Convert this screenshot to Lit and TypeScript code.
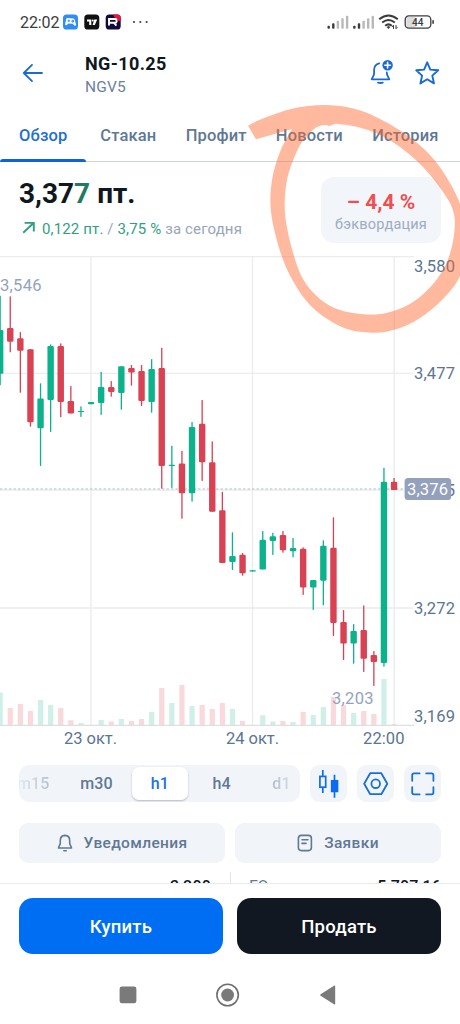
import { html, svg, css, LitElement } from "lit";
import { customElement } from "lit/decorators.js";

type Point = [number, number];

// up, high, low, body top, body bottom, volume height
type Candle = [boolean, number, number, number, number, number];

const STEP = 10.1;
const CHART_TOP = 256;
const VOLUME_BASE = 725;

const CANDLES: Candle[] = [
  [true, 295.7, 385.3, 330, 373.7, 32.5],
  [false, 296.3, 352.3, 328, 341.7, 17],
  [false, 332, 392.7, 338.3, 350.7, 21],
  [false, 349, 426.7, 349.3, 422.3, 14],
  [true, 383.3, 466, 398.5, 428.2, 25],
  [true, 344.3, 432, 346, 400, 20],
  [false, 343.3, 417.3, 346, 402, 17],
  [false, 386, 413.3, 401, 413.5, 4.7],
  [true, 406.3, 417, 411, 412, 2],
  [true, 402, 404.2, 402, 404.2, 0],
  [true, 371.7, 415, 387, 403, 5],
  [false, 381, 396.7, 387, 392, 3.5],
  [true, 366.3, 409.7, 366.3, 393, 6],
  [false, 365, 385.7, 368, 372.5, 4],
  [false, 365, 406, 371, 401, 6],
  [true, 359, 412.7, 369, 402, 13],
  [false, 347.7, 488.7, 368, 466, 37],
  [true, 445.7, 488, 464.7, 465.9, 22],
  [false, 450.7, 518.7, 463.5, 493.2, 40],
  [true, 422, 501.7, 427, 493.2, 19],
  [false, 400, 481, 423.8, 462.3, 20],
  [false, 441.3, 511.7, 462.2, 511.8, 16],
  [false, 491.7, 562.7, 510.2, 562.9, 22],
  [true, 532.3, 570, 556, 562, 16],
  [false, 553, 575.7, 554.8, 573.2, 4],
  [true, 570, 571.7, 570.2, 571.6, 0],
  [true, 531, 569.3, 539.7, 569.5, 9.7],
  [true, 532.7, 555, 536.3, 541, 3.5],
  [false, 531, 552.7, 535, 550.2, 4],
  [true, 538, 557.3, 548, 551.2, 3],
  [false, 547.3, 595, 548.8, 587.4, 13],
  [true, 580, 610, 580, 587.4, 10],
  [true, 540.3, 605.3, 545.8, 580.8, 18],
  [false, 517.3, 636, 547.8, 623, 28],
  [false, 610, 660, 622, 643.4, 20],
  [true, 624, 663.7, 631, 643.4, 12],
  [false, 605.3, 672, 630, 658.8, 14],
  [false, 651, 686, 655, 662, 11],
  [true, 467.7, 666.7, 481.7, 663, 46],
  [false, 478, 490, 481.7, 490, 1],
];

const MARKER_OUTER: Point[] = [
  [248, 125.7], [263, 118.5], [293, 108.5], [323, 105], [350, 107.7], [373, 115.5],
  [403, 132.5], [430, 155], [450, 183], [463, 213], [467, 245], [460, 276],
  [443, 299], [420, 318], [397, 329], [373, 332.7], [343, 327.5], [313, 308],
  [293, 281], [280, 251], [271, 212], [272, 180], [280, 152], [292, 129],
];

const MARKER_INNER: Point[] = [
  [335, 123.8], [353, 126], [377, 133.5], [400, 147], [423, 167], [443, 192],
  [453.5, 212], [454, 235], [447, 262], [433, 284], [413, 302], [390, 312],
  [367, 314.5], [340, 310], [320, 299], [303, 279], [292, 249], [285, 213],
  [287, 180], [297, 151], [307, 136], [317, 127], [326, 125], [329, 126.2],
];

function smooth(points: Point[]) {
  let d = `M${points[0][0]} ${points[0][1]}`;
  for (let i = 0; i < points.length - 1; i++) {
    const a = points[i - 1] ?? points[i];
    const b = points[i];
    const c = points[i + 1];
    const e = points[i + 2] ?? c;
    d += `C${b[0] + (c[0] - a[0]) / 6} ${b[1] + (c[1] - a[1]) / 6}`;
    d += ` ${c[0] - (e[0] - b[0]) / 6} ${c[1] - (e[1] - b[1]) / 6} ${c[0]} ${c[1]}`;
  }
  return d;
}

@customElement("status-bar")
export class StatusBarElement extends LitElement {
  static styles = css`
    :host {
      display: flex;
      align-items: center;
      justify-content: space-between;
      height: 44px;
      padding: 0 24px 0 20px;
      color: #3c3c3c;
    }

    .side {
      display: flex;
      align-items: center;
    }

    .time {
      font-size: 16px;
      width: 43px;
      letter-spacing: -0.1px;
      white-space: nowrap;
    }

    svg {
      display: block;
    }

    text {
      font-size: 10px;
      font-weight: 500;
      fill: #3c3c3c;
    }
  `;

  signal() {
    return [0, 1, 2, 3, 4].map(
      (i) => svg`<rect x=${i * 4.6} y=${10.5 - i * 2.5} width="2.4" height=${3 + i * 2.5} rx="0.8"
        fill=${i < 2 ? "#3c3c3c" : "#b9b9b9"} />`
    );
  }

  render() {
    return html`
      <div class="side">
        <span class="time">22:02</span>
        <svg width="88" height="16" viewBox="0 0 88 16">
          <rect x="0" y="0.5" width="15" height="15" rx="3.6" fill="#2f8df3" />
          <path d="M3.2 5.2Q3.4 4 4.6 4L10.2 4.6Q11.4 4.8 11.8 6L13 10.4Q13.2 12.4 11.4 11.4L9.6 9.8L5.6 9.4L3.4 11.2Q1.8 11.8 2.2 9.6Z" fill="#fff" />
          <path d="M4.6 6.8H7M5.8 5.6V8M9 6.4h1.6v1.6h-1.6z" stroke="#2f8df3" fill="none" />
          <rect x="21.3" y="0.5" width="15" height="15" rx="3.6" fill="#111" />
          <path d="M24 5.5H28.3V11H26.2V7.5H24ZM31.2 5.5H34.2L31.8 11H29.6Z" fill="#fff" />
          <circle cx="29.7" cy="6.5" r="1" fill="#fff" />
          <rect x="42.7" y="0.5" width="15" height="15" rx="3.6" fill="#130a3c" />
          <path d="M50 0.5H54.1Q57.7 0.5 57.7 4.1V7.5Q52 6 50 0.5Z" fill="#ed143b" />
          <path d="M46 11.6V5H52.2Q53.6 5 53.6 6.4V7.4Q53.6 8.7 52.2 8.7H46.5M50.8 8.7L53.4 11.6" stroke="#fff" stroke-width="1.9" fill="none" />
          <circle cx="71" cy="8" r="1.1" fill="#444" />
          <circle cx="77.3" cy="8" r="1.1" fill="#444" />
          <circle cx="83.6" cy="8" r="1.1" fill="#444" />
        </svg>
      </div>
      <div class="side">
        <svg width="109" height="18" viewBox="0 0 109 18">
          <g transform="translate(0.5 2.2)">${this.signal()}</g>
          <g transform="translate(26.2 2.2)">${this.signal()}</g>
          <g fill="none" stroke="#3c3c3c" stroke-width="2">
            <path d="M52.2 6.3Q61.5 -1.2 70.8 6.3" />
            <path d="M55.2 9.6Q61.5 4.4 67.8 9.6" />
            <path d="M58.2 12.7Q61.5 10 64.8 12.7" />
          </g>
          <path d="M59.6 14L61.5 13L63.4 14L61.5 16Z" fill="#3c3c3c" />
          <path d="M66.5 16V12.4M65 14L66.5 12.2M69 12V15.6M70.5 14L69 15.8" stroke="#3c3c3c" fill="none" />
          <rect x="79.4" y="4" width="10" height="10.4" rx="2.4" fill="#dcdcdc" />
          <rect x="78.2" y="2.9" width="25.6" height="12.2" rx="3.6" fill="none" stroke="#3c3c3c" stroke-width="1.3" />
          <rect x="105.3" y="7" width="1.6" height="4" rx="0.8" fill="#3c3c3c" />
          <text x="85" y="12.6">44</text>
        </svg>
      </div>
    `;
  }
}

@customElement("price-chart")
export class PriceChartElement extends LitElement {
  static styles = css`
    :host {
      display: block;
      height: 500px;
    }

    svg {
      display: block;
    }

    .grid {
      stroke: #eaecee;
      stroke-width: 1.3;
    }

    .base {
      stroke: #dedfe1;
      stroke-width: 1.3;
    }

    .last {
      stroke: #b4bbc7;
      stroke-width: 1.2;
      stroke-dasharray: 2.4 2.1;
    }

    .up {
      fill: #0bb28c;
    }

    .down {
      fill: #d84253;
    }

    .volume.up {
      fill: #cff0e7;
    }

    .volume.down {
      fill: #f9d9dc;
    }

    text {
      font-size: 16.5px;
      fill: #5b7592;
    }

    .extreme {
      fill: #94a3be;
    }

    .tag {
      fill: #93a1bd;
    }

    .tag-text {
      fill: #fff;
    }
  `;

  candle([up, high, low, top, bottom]: Candle, i: number) {
    const x = 0.15 + i * STEP;
    const side = up ? "up" : "down";
    return svg`
      <rect class=${side} x=${x - 0.65} y=${high} width="1.3" height=${low - high} rx="0.4" />
      <rect class=${side} x=${x - 3.2} y=${top} width="6.4" height=${bottom - top} rx=${Math.min(1.2, (bottom - top) / 2)} />
    `;
  }

  volume(c: Candle, i: number) {
    return svg`<rect class="volume ${c[0] ? "up" : "down"}" x=${0.15 + i * STEP - 2.6}
      y=${VOLUME_BASE - c[5]} width="5.2" height=${c[5]} />`;
  }

  label(text: string, x: number, y: number, width: number, cls = "") {
    return svg`<text class=${cls} x=${x} y=${y} textLength=${width}>${text}</text>`;
  }

  render() {
    return html`
      <svg width="460" height="500" viewBox="0 ${CHART_TOP} 460 500">
        <path class="grid" d="M0 256.6H414M0 373.4H404M0 490.2H404M0 608H404M404 373.4H413M404 608H413" />
        <path class="grid" d="M91 256V725M252.5 256V725M394.2 256V725" />
        ${CANDLES.map((c, i) => this.volume(c, i))}
        <path class="base" d="M0 725.3H414" />
        <path class="last" d="M0 489H404" />
        ${CANDLES.map((c, i) => this.candle(c, i))}
        ${this.label("3,546", 0, 290.7, 41.5, "extreme")}
        ${this.label("3,203", 332, 703.7, 41.5, "extreme")}
        ${this.label("3,580", 414, 271.8, 41)}
        ${this.label("3,477", 414, 379.4, 41)}
        ${this.label("3,375", 414, 496, 41)}
        ${this.label("3,272", 414, 614, 41)}
        ${this.label("3,169", 414, 722.2, 41)}
        ${this.label("23 окт.", 64, 743.7, 53)}
        ${this.label("24 окт.", 226, 743.7, 53)}
        ${this.label("22:00", 363, 743.7, 41.5)}
        <rect class="tag" x="404.6" y="478" width="46.6" height="22" rx="3.5" />
        ${this.label("3,376", 407, 495.4, 41, "tag-text")}
      </svg>
    `;
  }
}

@customElement("app-root")
export class AppRootElement extends LitElement {
  static styles = css`
    :host {
      display: flex;
      flex-direction: column;
      position: relative;
      width: 460px;
      height: 1024px;
      overflow: hidden;
      background: #fff;
      font-family: Roboto, "Liberation Sans", sans-serif;
      color: #0f1720;
    }

    svg {
      display: block;
    }

    header {
      display: flex;
      align-items: center;
      height: 58px;
      padding: 0 20px 0 22px;
    }

    .title {
      flex: 1;
      padding: 3px 0 0 41px;
    }

    h1 {
      margin: 0;
      font-size: 18px;
      font-weight: 700;
      line-height: 24px;
      letter-spacing: 0.4px;
    }

    .ticker {
      font-size: 15.5px;
      line-height: 22px;
      letter-spacing: 0.2px;
      color: #6b82a0;
    }

    .head-icons {
      display: flex;
      gap: 20px;
    }

    .tabs {
      display: flex;
      align-items: center;
      gap: 29.3px;
      height: 54px;
      padding: 13px 0 0 19px;
      box-sizing: border-box;
      font-size: 16.5px;
      font-weight: 500;
      letter-spacing: 0.15px;
      color: #5f7894;
      white-space: nowrap;
    }

    .tabs .active {
      margin-right: 3.5px;
      color: #1f6fd0;
    }

    .rule {
      height: 3px;
      margin-top: 3px;
      background: linear-gradient(#ccd4e2, #ccd4e2) 0 2px / 100% 1px no-repeat;
    }

    .indicator {
      width: 86px;
      height: 3px;
      border-radius: 3px 3px 0 0;
      background: #0b64dc;
    }

    .summary {
      display: flex;
      justify-content: space-between;
      height: 94px;
      box-sizing: border-box;
      padding: 15px 19px 0;
    }

    .price {
      font-size: 28px;
      font-weight: 700;
      line-height: 34px;
    }

    .tick {
      color: #237a63;
    }

    .change {
      display: flex;
      align-items: center;
      gap: 6px;
      margin-top: 8px;
      padding-left: 3px;
      font-size: 15px;
      line-height: 20px;
      letter-spacing: 0.14px;
      color: #97a5ba;
      white-space: nowrap;
    }

    .change b {
      font-weight: 400;
      color: #2f9f7f;
    }

    .spread {
      display: flex;
      flex-direction: column;
      align-items: center;
      width: 120px;
      height: 66px;
      border-radius: 13px;
      background: #f2f5fa;
    }

    .spread-value {
      margin-top: 12px;
      font-size: 21px;
      font-weight: 700;
      line-height: 26px;
      color: #f04f4f;
    }

    .spread-name {
      font-size: 14.5px;
      line-height: 20px;
      letter-spacing: 0.2px;
      color: #9dabc3;
    }

    .toolbar {
      display: flex;
      gap: 9.5px;
      padding: 9px 19px 0;
    }

    .frames {
      display: grid;
      grid-template-columns: 42.5px 70px 56.5px 67px 1fr;
      align-items: center;
      justify-items: center;
      flex: 1;
      height: 37px;
      box-sizing: border-box;
      padding: 2px 0;
      border-radius: 10px;
      background: #f1f5fa;
      overflow: hidden;
      font-size: 16px;
      font-weight: 500;
      letter-spacing: 0.1px;
      color: #5f7894;
    }

    .frame.selected {
      width: 100%;
      height: 33px;
      border-radius: 7px;
      background: #fff;
      box-shadow: 0 1px 2px rgba(40, 50, 70, 0.3);
      line-height: 34px;
      text-align: center;
      color: #1a73d9;
    }

    .frame.first {
      justify-self: start;
      margin-left: -2px;
      color: transparent;
      background: linear-gradient(90deg, #e6ebf2, #b6c2d0);
      background-clip: text;
      -webkit-background-clip: text;
    }

    .frame.fading {
      margin-left: 8px;
      color: transparent;
      background: linear-gradient(90deg, #aebccc, #d5dde7);
      background-clip: text;
      -webkit-background-clip: text;
    }

    .tool {
      width: 37.5px;
      height: 37px;
      border-radius: 9px;
      background: #f1f5fa;
    }

    .actions {
      display: grid;
      grid-template-columns: 1fr 1fr;
      gap: 10px;
      padding: 21px 19px 0;
    }

    .action {
      display: flex;
      align-items: center;
      justify-content: center;
      gap: 11px;
      height: 40px;
      border-radius: 9px;
      background: #f1f5fa;
      font-size: 15.5px;
      font-weight: 500;
      letter-spacing: 0.35px;
      color: #5f7894;
    }

    .facts {
      display: grid;
      grid-template-columns: 212px 1fr;
      height: 21px;
      box-sizing: border-box;
      padding: 9px 19px 0;
      border-bottom: 1px solid #e7eaee;
      overflow: hidden;
      font-size: 16px;
    }

    .fact {
      display: flex;
      justify-content: space-between;
      height: 30px;
      padding-top: 5px;
      line-height: 19px;
      color: #5f7894;
    }

    .fact:first-child {
      padding-right: 19px;
      border-right: 1px solid #e1e5ea;
    }

    .fact:last-child {
      padding-left: 18px;
    }

    .fact b {
      font-weight: 500;
      letter-spacing: 0.2px;
      color: #0f1720;
    }

    .trade {
      display: grid;
      grid-template-columns: 1fr 1fr;
      gap: 14px;
      padding: 14px 19px 0;
    }

    .deal {
      height: 56px;
      border-radius: 14px;
      background: #111822;
      color: #fff;
      font-size: 18.5px;
      font-weight: 500;
      line-height: 58px;
      letter-spacing: 0.2px;
      text-align: center;
    }

    .deal.buy {
      background: #006ef2;
    }

    nav {
      display: flex;
      align-items: center;
      justify-content: space-between;
      padding: 28px 123px 0 119px;
    }

    /* hand-drawn highlight lying over the page */
    .marker {
      position: absolute;
      inset: 0;
      pointer-events: none;
    }
  `;

  render() {
    return html`
      <status-bar></status-bar>
      <header>
        <svg width="22" height="22" viewBox="0 0 22 22" fill="none" stroke="#1a6bd0" stroke-width="1.8" stroke-linecap="round" stroke-linejoin="round">
          <path d="M20 11H2M10 2.9L1.8 11L10 19.1" />
        </svg>
        <div class="title">
          <h1>NG-10.25</h1>
          <div class="ticker">NGV5</div>
        </div>
        <div class="head-icons">
          <svg width="24" height="26" viewBox="0 0 24 26" fill="none" stroke="#1a6bd0" stroke-width="1.8" stroke-linecap="round" stroke-linejoin="round">
            <path d="M9.2 3.4Q4.2 4.6 4.1 10V13.4Q4 15 3.1 16.4L1.7 19.3H19.3L17.9 16.4Q16.8 14.4 16.8 12.4" />
            <path d="M8 22.6Q10.4 23.4 12.8 22.6" />
            <circle cx="17.6" cy="5.2" r="5.2" fill="#1a6bd0" stroke="none" />
            <path d="M14.8 5.2H20.4M17.6 2.4V8" stroke="#fff" stroke-width="1.6" />
          </svg>
          <svg width="26" height="26" viewBox="0 0 26 26" fill="none" stroke="#1a6bd0" stroke-width="1.9" stroke-linejoin="round">
            <path d="M13.2 2.3L16.3 9.6L24.2 10.3L18.3 15.6L20 23.4L13.2 19.3L6.4 23.4L8.1 15.6L2.2 10.3L10.1 9.6Z" />
          </svg>
        </div>
      </header>
      <div class="tabs">
        <span class="active">Обзор</span>
        <span>Стакан</span>
        <span>Профит</span>
        <span>Новости</span>
        <span>История</span>
      </div>
      <div class="rule"><div class="indicator"></div></div>

      <section class="summary">
        <div>
          <div class="price">3,37<span class="tick">7</span> пт.</div>
          <div class="change">
            <svg width="14" height="14" viewBox="0 0 14 14" fill="none" stroke="#2f9f7f" stroke-width="1.9">
              <path d="M1.2 10.8L11.3 1.2M2.6 0.9H11.8V9.6" />
            </svg>
            <span><b>0,122 пт.</b> / <b>3,75 %</b> за сегодня</span>
          </div>
        </div>
        <div class="spread">
          <span class="spread-value">– 4,4 %</span>
          <span class="spread-name">бэквордация</span>
        </div>
      </section>

      <price-chart></price-chart>

      <div class="toolbar">
        <div class="frames">
          <span class="frame first">m15</span>
          <span class="frame">m30</span>
          <span class="frame selected">h1</span>
          <span class="frame">h4</span>
          <span class="frame fading">d1</span>
        </div>
        <svg class="tool" viewBox="0 0 37.5 37" fill="none" stroke="#0b6cf0" stroke-width="1.7">
          <path d="M12.8 5V11.4M12.8 22.3V28M24.5 9.8V15.4M24.5 26.6V32.8" />
          <rect x="9.9" y="11.4" width="5.8" height="10.8" />
          <rect x="21.7" y="15.8" width="5.8" height="10.6" fill="#0b6cf0" />
        </svg>
        <svg class="tool" viewBox="0 0 37.5 37" fill="none" stroke="#1a6fd4" stroke-width="1.8" stroke-linejoin="round">
          <path d="M13.2 8.2H24.3L30.3 18.7L24.3 29.2H13.2L7.2 18.7Z" />
          <circle cx="18.7" cy="18.7" r="4.3" />
        </svg>
        <svg class="tool" viewBox="0 0 37.5 37" fill="none" stroke="#1a6fd4" stroke-width="1.8" stroke-linecap="round">
          <path d="M8.2 15.8V10.2Q8.2 8.4 10 8.4H15.6M22.2 8.4H27.6Q29.4 8.4 29.4 10.2V15.8M29.4 22.2V27.6Q29.4 29.4 27.6 29.4H22.2M15.6 29.4H10Q8.2 29.4 8.2 27.6V22.2" />
        </svg>
      </div>

      <div class="actions">
        <div class="action">
          <svg width="16" height="20" viewBox="0 0 16 20" fill="none" stroke="#5f7894" stroke-width="1.6" stroke-linecap="round" stroke-linejoin="round">
            <path d="M8 2.4Q3.4 2.6 3.3 7.4V10Q3.2 11.6 2.2 13L1.5 15H14.5L13.8 13Q12.8 11.6 12.7 10V7.4Q12.6 2.6 8 2.4Z" />
            <path d="M6.8 17.8H9.2" />
          </svg>
          Уведомления
        </div>
        <div class="action">
          <svg width="16" height="20" viewBox="0 0 16 20" fill="none" stroke="#5f7894" stroke-width="1.6" stroke-linecap="round">
            <rect x="1.4" y="2.4" width="13" height="15.2" rx="3" />
            <path d="M5 6.8H11M5 10.4H9" />
          </svg>
          Заявки
        </div>
      </div>

      <div class="facts">
        <div class="fact"><span></span><b>3,200</b></div>
        <div class="fact"><span>ГО</span><b>5 707,16</b></div>
      </div>

      <div class="trade">
        <div class="deal buy">Купить</div>
        <div class="deal">Продать</div>
      </div>

      <nav>
        <svg width="18" height="26" viewBox="0 0 18 26"><rect x="0.6" y="4.5" width="16.8" height="16.8" rx="2.4" fill="#7a7a7a" /></svg>
        <svg width="26" height="26" viewBox="0 0 26 26">
          <circle cx="12.6" cy="13" r="10.7" fill="none" stroke="#6f6f6f" stroke-width="1.6" />
          <circle cx="12.6" cy="13" r="6.4" fill="#7a7a7a" />
        </svg>
        <svg width="18" height="26" viewBox="0 0 18 26"><path d="M1.6 12.2L15 3.8Q16.2 3.2 16.2 4.4V21.8Q16.2 23 15 22.3L1.6 13.8Q0.6 13 1.6 12.2Z" fill="#7a7a7a" /></svg>
      </nav>

      <svg class="marker" width="460" height="360" viewBox="0 0 460 360">
        <path d="${smooth(MARKER_OUTER)}L256 139.3Z${smooth(MARKER_INNER)}Z" fill="#ff662d" fill-opacity="0.46" fill-rule="evenodd" />
      </svg>
    `;
  }
}
